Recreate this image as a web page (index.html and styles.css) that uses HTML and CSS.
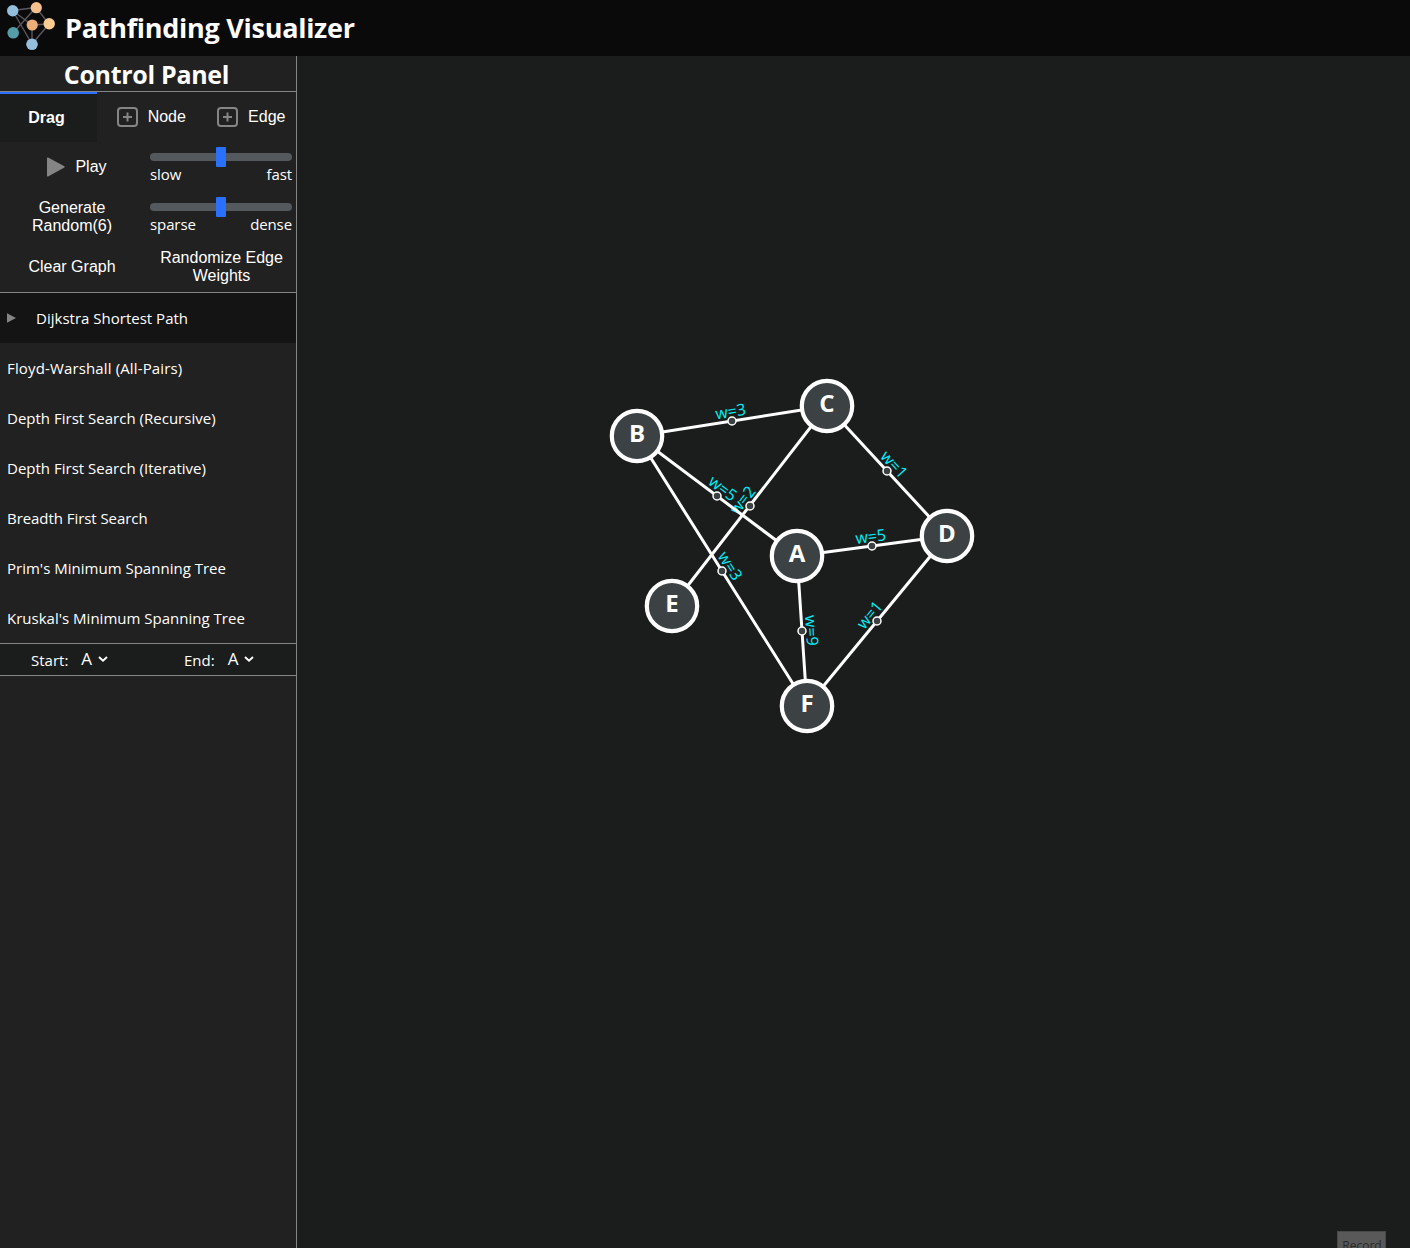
FILE: index.html
```html
<!DOCTYPE html>
<html lang="en">
<head>
<meta charset="utf-8">
<title>Pathfinding Visualizer</title>
<link rel="stylesheet" href="styles.css">
</head>
<body>
<header class="topbar">
  <svg class="logo" width="56" height="56" viewBox="0 0 56 56">
    <g stroke="#5b5660" stroke-width="1.4">
      <path d="M12.500 10.500L36 7.500M12.500 10.500L32 25M12.500 10.500L32 44M36 7.500L13 33M36 7.500L49 24M32 25L49 24M32 25V44M49 24L32 44" fill="none"/>
    </g>
    <circle cx="12.700" cy="10.700" r="5.700" fill="#93bfdd"/>
    <circle cx="36.300" cy="7.700" r="5.600" fill="#f4c08d"/>
    <circle cx="49.200" cy="23.700" r="5.700" fill="#fbcd92"/>
    <circle cx="32.200" cy="25" r="5.600" fill="#ecae78"/>
    <circle cx="13.200" cy="32.800" r="5.800" fill="#559caa"/>
    <circle cx="32" cy="44.300" r="5.800" fill="#93bfdd"/>
  </svg>
  <h1 class="title">Pathfinding Visualizer</h1>
</header>
<main class="workspace">
  <aside class="panel">
    <h2 class="panel-title">Control Panel</h2>
    <div class="tools">
      <button class="tool active">Drag</button>
      <button class="tool">
        <svg width="21" height="20" viewBox="0 0 21 20" fill="none" stroke="#858585"><rect x="1" y="1" width="19" height="18" rx="3" stroke-width="2"/><path d="M10.500 5.500v9M6 10h9" stroke-width="2"/></svg>
        Node
      </button>
      <button class="tool">
        <svg width="21" height="20" viewBox="0 0 21 20" fill="none" stroke="#858585"><rect x="1" y="1" width="19" height="18" rx="3" stroke-width="2"/><path d="M10.500 5.500v9M6 10h9" stroke-width="2"/></svg>
        Edge
      </button>
    </div>
    <div class="actions">
      <button class="action play"><svg width="18" height="20" viewBox="0 0 18 20"><path d="M0 1.200Q0 0 1.100.6L17.400 9.300Q18 10 17.400 10.500L1.100 19.400Q0 20 0 18.800Z" fill="#858585"/></svg>Play</button>
      <div class="slider"><div class="track"><span class="thumb"></span></div><div class="range"><span>slow</span><span>fast</span></div></div>
      <button class="action">Generate<br>Random(6)</button>
      <div class="slider"><div class="track"><span class="thumb"></span></div><div class="range"><span>sparse</span><span>dense</span></div></div>
      <button class="action">Clear Graph</button>
      <button class="action randomize">Randomize Edge<br>Weights</button>
    </div>
    <ul class="algorithms">
      <li class="algorithm selected"><svg width="9" height="10" viewBox="0 0 9 10"><path d="M0 .3L9 5L0 9.700Z" fill="#858585"/></svg><span>Dijkstra Shortest Path</span></li>
      <li class="algorithm all-pairs"><span>Floyd-Warshall (All-Pairs)</span></li>
      <li class="algorithm"><span>Depth First Search (Recursive)</span></li>
      <li class="algorithm"><span>Depth First Search (Iterative)</span></li>
      <li class="algorithm bfs"><span>Breadth First Search</span></li>
      <li class="algorithm"><span>Prim's Minimum Spanning Tree</span></li>
      <li class="algorithm"><span>Kruskal's Minimum Spanning Tree</span></li>
    </ul>
    <div class="endpoints">
      <div class="endpoint">Start:<span class="choice">A</span><svg width="10" height="6" viewBox="0 0 10 6"><path d="M1 1L5 4.700L9 1" fill="none" stroke="#fff" stroke-width="1.900"/></svg></div>
      <div class="endpoint">End:<span class="choice">A</span><svg width="10" height="6" viewBox="0 0 10 6"><path d="M1 1L5 4.700L9 1" fill="none" stroke="#fff" stroke-width="1.900"/></svg></div>
    </div>
  </aside>
  <section class="stage">
    <svg class="graph" width="1113" height="1192" viewBox="297 56 1113 1192">
      <g class="weight">
        <text transform="translate(732 421) rotate(-8.970)" y="-4">w=3</text>
        <text transform="translate(717 496) rotate(36.870)" y="-4">w=5</text>
        <text transform="translate(750 506) rotate(-52.220)" y="-4">w=2</text>
        <text transform="translate(887 471) rotate(47.290)" y="-4">w=1</text>
        <text transform="translate(872 546) rotate(-7.590)" y="-4">w=5</text>
        <text transform="translate(877 621) rotate(-50.530)" y="-4">w=1</text>
        <text transform="translate(802 631) rotate(86.190)" y="-4">w=9</text>
        <text transform="translate(722 571) rotate(57.800)" y="-4">w=3</text>
      </g>
      <path class="edges" d="M637 436L827 406M637 436L797 556M827 406L672 606M827 406L947 536M797 556L947 536M947 536L807 706M797 556L807 706M637 436L807 706"/>
      <g class="handles">
        <circle cx="732" cy="421" r="4"/><circle cx="717" cy="496" r="4"/><circle cx="750" cy="506" r="4"/><circle cx="887" cy="471" r="4"/>
        <circle cx="872" cy="546" r="4"/><circle cx="877" cy="621" r="4"/><circle cx="802" cy="631" r="4"/><circle cx="722" cy="571" r="4"/>
      </g>
      <g class="nodes">
        <circle cx="797" cy="556" r="25"/><circle cx="637" cy="436" r="25"/><circle cx="827" cy="406" r="25"/>
        <circle cx="947" cy="536" r="25"/><circle cx="672" cy="606" r="25"/><circle cx="807" cy="706" r="25"/>
      </g>
      <g class="names">
        <text x="797" y="562">A</text><text x="637" y="442">B</text><text x="827" y="412">C</text>
        <text x="947" y="542">D</text><text x="672" y="612">E</text><text x="807" y="712">F</text>
      </g>
    </svg>
    <button class="record">Record</button>
  </section>
</main>
</body>
</html>
```
FILE: styles.css
```css
* { box-sizing: border-box; }
body {
  margin: 0;
  height: 1248px;
  overflow: hidden;
  display: flex;
  flex-direction: column;
  background: #1b1d1c;
  color: #fff;
  font: 15px/20px "Open Sans", "Noto Sans", sans-serif;
}
button {
  margin: 0;
  padding: 0;
  border: 0;
  background: none;
  color: inherit;
  font: 16px/18px "Liberation Sans", Arial, sans-serif;
}
.topbar { display: flex; height: 56px; background: #0a0a0a; }
.logo { flex: none; }
.title { margin: 0 0 0 9px; font-size: 27px; line-height: 56px; font-weight: 700; letter-spacing: -0.27px; white-space: nowrap; }
.workspace { display: flex; flex: 1; min-height: 0; }
.panel { width: 297px; flex: none; background: #212121; border-right: 1px solid #858585; }
.panel-title { margin: 0; height: 36px; padding-right: 3px; border-bottom: 1px solid #858585; text-align: center; font-size: 25px; line-height: 36px; letter-spacing: -0.3px; }
.tools { display: grid; grid-template-columns: 97px 1fr 1fr; height: 50px; }
.tool { display: flex; align-items: center; justify-content: center; gap: 10px; padding-left: 9px; }
.tool + .tool + .tool { padding-left: 10px; }
.tool.active { padding: 0 4px 0 0; background: #1b1d1c; border-top: 2px solid #2970ff; font-weight: 700; }
.actions { display: grid; grid-template-columns: 144px 152px; grid-auto-rows: 50px; border-bottom: 1px solid #858585; height: 151px; }
.action { text-align: center; }
.action.play { display: flex; align-items: center; justify-content: center; gap: 10px; padding-left: 10px; }
.action.randomize { padding-left: 3px; }
.slider { padding: 11px 4px 0 6px; }
.track { display: flex; justify-content: center; align-items: center; height: 8px; border-radius: 4px; background: #54595e; }
.thumb { width: 10px; height: 20px; flex: none; border-radius: 1px; background: #2970ff; }
.range { display: flex; justify-content: space-between; margin-top: 3px; letter-spacing: -0.1px; }
.algorithms { margin: 0; padding: 0; list-style: none; }
.algorithm { display: flex; align-items: center; height: 50px; padding: 0 7px; gap: 20px; letter-spacing: 0.01px; white-space: nowrap; }
.algorithm.all-pairs { letter-spacing: 0.14px; }
.algorithm.bfs { letter-spacing: -0.06px; }
.algorithm.selected { background: #141414; }
.endpoints { display: flex; height: 33px; border-top: 1px solid #858585; border-bottom: 1px solid #858585; background: #1b1d1c; }
.endpoint { display: flex; align-items: center; width: 153px; flex: none; padding: 1px 0 0 31px; }
.endpoint + .endpoint { width: 143px; }
.endpoint .choice { margin: -2px 6px 0 13px; font-size: 17px; }
.endpoint svg { margin-top: -3px; }
.stage { position: relative; flex: 1; min-width: 0; }
.graph { display: block; }
.edges { fill: none; stroke: #fff; stroke-width: 3; }
.handles { fill: #3c4143; stroke: #fff; stroke-width: 1.5; }
.nodes { fill: #3c4143; stroke: #fff; stroke-width: 4; }
.nodes circle { r: 25px; stroke-width: 4px; }
.nodes circle { r: 25.100px; }
.nodes { stroke-width: 4px; }
.nodes circle { r: 25.200px; stroke-width: 4.200px; }
.names { fill: #fff; font-size: 24px; font-weight: 700; text-anchor: middle; }
.weight { fill: #00f0fa; font-size: 16px; text-anchor: middle; }
.record { position: absolute; left: 1040px; top: 1175px; width: 49px; height: 27px; padding-left: 1px; border: 1px solid #484848; background: #595959; color: #292929; font: 12px/27px "Open Sans", sans-serif; }
```
